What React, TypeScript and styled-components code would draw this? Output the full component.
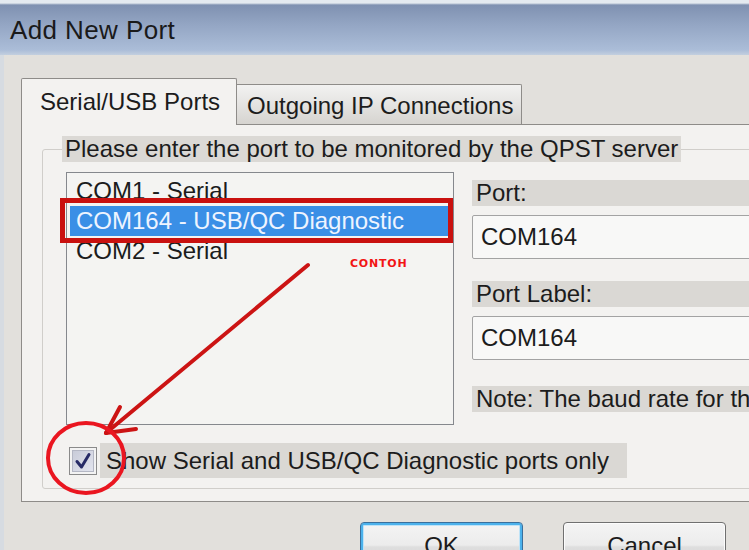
import React from 'react';
import styled, { createGlobalStyle } from 'styled-components';

const Global = createGlobalStyle`
  html, body { margin: 0; padding: 0; background: #e2e0dc; overflow: hidden; }
  * { box-sizing: border-box; }
`;

const Window = styled.div`
  position: relative;
  width: 749px;
  height: 550px;
  overflow: hidden;
  background: #e2e0dc;
  font-family: "Liberation Sans", Arial, sans-serif;
  font-size: 24px;
  color: #1c1c1c;
`;

const TitleBar = styled.div`
  height: 55px;
  display: flex;
  align-items: center;
  padding: 6px 0 0 10px;
  font-size: 26px;
  letter-spacing: 0.4px;
  color: #1a1a1a;
  background: linear-gradient(
    180deg,
    #e4eaf0 0px,
    #e4eaf0 3px,
    #7f91b1 5px,
    #94a6c4 25px,
    #abbdd8 50px,
    #c3cfdf 55px
  );
`;

const Body = styled.div`
  border-left: 4px solid #d6dbe1;
  padding: 23px 0 0 17px;
  height: 495px;
`;

const TabStrip = styled.div`
  display: flex;
  align-items: flex-end;
  height: 46px;
`;

const Tab = styled.div<{ $active?: boolean }>`
  position: relative;
  z-index: 1;
  display: flex;
  align-items: center;
  white-space: nowrap;
  border: 1px solid #8e8c89;
  border-bottom: none;
  ${(p) =>
    p.$active
      ? `
    width: 216px;
    height: 47px;
    margin-bottom: -1px;
    padding-left: 18px;
    background: #f3f2f0;
    border-radius: 2px 2px 0 0;
  `
      : `
    width: 285px;
    height: 40px;
    padding: 2px 0 0 10px;
    border-left: none;
    background: linear-gradient(180deg, #f2f2f1 0%, #e6e5e3 45%, #d6d4d0 100%);
    border-radius: 0 2px 0 0;
  `}
`;

const Panel = styled.div`
  width: 790px;
  height: 378px;
  border: 1px solid #8e8c89;
  background: #f3f2f0;
  padding: 11px 0 0 20px;
`;

const GroupBox = styled.fieldset`
  margin: 0;
  padding: 0;
  width: 780px;
  height: 353px;
  border: 1px solid #d0ceca;
  border-radius: 3px;
`;

const Legend = styled.legend`
  margin-left: 19px;
  padding: 0 3px;
  height: 26px;
  line-height: 26px;
  white-space: nowrap;
  background: #dbd9d5;
`;

const Content = styled.div`
  display: grid;
  grid-template-columns: 388px 1fr;
  column-gap: 18px;
  padding: 10px 0 0 23px;
`;

const ListBox = styled.div`
  height: 253px;
  border: 1px solid #85888d;
  background: #f4f4f2;
  padding: 3px;
`;

const ListItem = styled.div<{ $selected?: boolean }>`
  height: 30px;
  line-height: 30px;
  padding-left: 6px;
  white-space: nowrap;
  background: ${(p) => (p.$selected ? '#3a8fe6' : 'transparent')};
  color: ${(p) => (p.$selected ? '#eef4ff' : '#1c1c1c')};
`;

const RightColumn = styled.div`
  display: flex;
  flex-direction: column;
  gap: 22px;
  padding-top: 8px;
  min-width: 0;
  overflow: hidden;
`;

const FieldGroup = styled.div`
  display: flex;
  flex-direction: column;
  gap: 9px;
`;

const FieldLabel = styled.div<{ $note?: boolean }>`
  height: 26px;
  line-height: 26px;
  padding-left: 4px;
  white-space: nowrap;
  background: #dad8d4;
  margin-top: ${(p) => (p.$note ? '4px' : '0')};
`;

const TextBox = styled.div`
  height: 44px;
  line-height: 42px;
  padding-left: 8px;
  border: 1px solid #a3a3a3;
  border-radius: 2px;
  background: #f8f8f7;
`;

const CheckRow = styled.div`
  grid-column: 1 / -1;
  display: flex;
  align-items: center;
  margin-top: 18px;
  height: 35px;
`;

const CheckBox = styled.div`
  width: 28px;
  height: 28px;
  margin-left: 3px;
  border: 1px solid #8a8a8a;
  padding: 2px;
  background: #f3f3f3;
`;

const CheckInner = styled.div`
  width: 100%;
  height: 100%;
  display: flex;
  align-items: center;
  justify-content: center;
  background: linear-gradient(135deg, #c9ccd9 0%, #e2e4ee 100%);
  border: 1px solid #b4b7c4;
`;

const CheckLabel = styled.div`
  height: 35px;
  line-height: 35px;
  margin-left: 3px;
  padding: 0 18px 0 6px;
  white-space: nowrap;
  background: #dad8d4;
`;

const ButtonRow = styled.div`
  display: flex;
  gap: 40px;
  padding-left: 339px;
  margin-top: 20px;
`;

const Button = styled.div<{ $default?: boolean }>`
  width: 163px;
  height: 48px;
  display: flex;
  align-items: center;
  justify-content: center;
  border-radius: 4px;
  border: 1px solid ${(p) => (p.$default ? '#3a6f9c' : '#707070')};
  background: linear-gradient(180deg, #f4f4f4 0%, #ececec 48%, #dedede 52%, #d2d2d2 100%);
  box-shadow: ${(p) =>
    p.$default ? 'inset 0 0 0 2px #4cb2ec, inset 0 0 0 3px #bfe3f7' : 'inset 0 0 0 1px #fcfcfc'};
`;

const RedBox = styled.div`
  position: absolute;
  left: 60px;
  top: 198px;
  width: 393px;
  height: 45px;
  border: 5px solid #c9110f;
  pointer-events: none;
`;

const Contoh = styled.div`
  position: absolute;
  left: 350px;
  top: 257px;
  font-family: "DejaVu Sans", "Liberation Sans", sans-serif;
  font-size: 11px;
  font-weight: bold;
  letter-spacing: 0.8px;
  color: #f21414;
`;

const Overlay = styled.svg`
  position: absolute;
  left: 0;
  top: 0;
  pointer-events: none;
`;

export default function App() {
  return (
    <Window>
      <Global />
      <TitleBar>Add New Port</TitleBar>
      <Body>
        <TabStrip>
          <Tab $active>Serial/USB Ports</Tab>
          <Tab>Outgoing IP Connections</Tab>
        </TabStrip>
        <Panel>
          <GroupBox>
            <Legend>Please enter the port to be monitored by the QPST server</Legend>
            <Content>
              <ListBox>
                <ListItem>COM1 - Serial</ListItem>
                <ListItem $selected>COM164 - USB/QC Diagnostic</ListItem>
                <ListItem>COM2 - Serial</ListItem>
              </ListBox>
              <RightColumn>
                <FieldGroup>
                  <FieldLabel>Port:</FieldLabel>
                  <TextBox>COM164</TextBox>
                </FieldGroup>
                <FieldGroup>
                  <FieldLabel>Port Label:</FieldLabel>
                  <TextBox>COM164</TextBox>
                </FieldGroup>
                <FieldLabel $note>Note: The baud rate for th</FieldLabel>
              </RightColumn>
              <CheckRow>
                <CheckBox>
                  <CheckInner>
                    <svg width="18" height="18" viewBox="0 0 18 18">
                      <path d="M3 9.5 L7.5 15 L15 2.5" fill="none" stroke="#262a66" strokeWidth="3" strokeLinejoin="round" strokeLinecap="round" />
                    </svg>
                  </CheckInner>
                </CheckBox>
                <CheckLabel>Show Serial and USB/QC Diagnostic ports only</CheckLabel>
              </CheckRow>
            </Content>
          </GroupBox>
        </Panel>
        <ButtonRow>
          <Button $default>OK</Button>
          <Button>Cancel</Button>
        </ButtonRow>
      </Body>
      <RedBox />
      <Contoh>CONTOH</Contoh>
      <Overlay width="749" height="550" viewBox="0 0 749 550">
        <g stroke="#cc1414" strokeWidth="4" strokeLinecap="round" fill="none">
          <line x1="308" y1="265" x2="106" y2="433" />
          <line x1="106" y1="433" x2="120" y2="407" />
          <line x1="106" y1="433" x2="136" y2="429" />
        </g>
        <ellipse cx="86" cy="458" rx="38" ry="35" fill="none" stroke="#ea1620" strokeWidth="4" />
      </Overlay>
    </Window>
  );
}
